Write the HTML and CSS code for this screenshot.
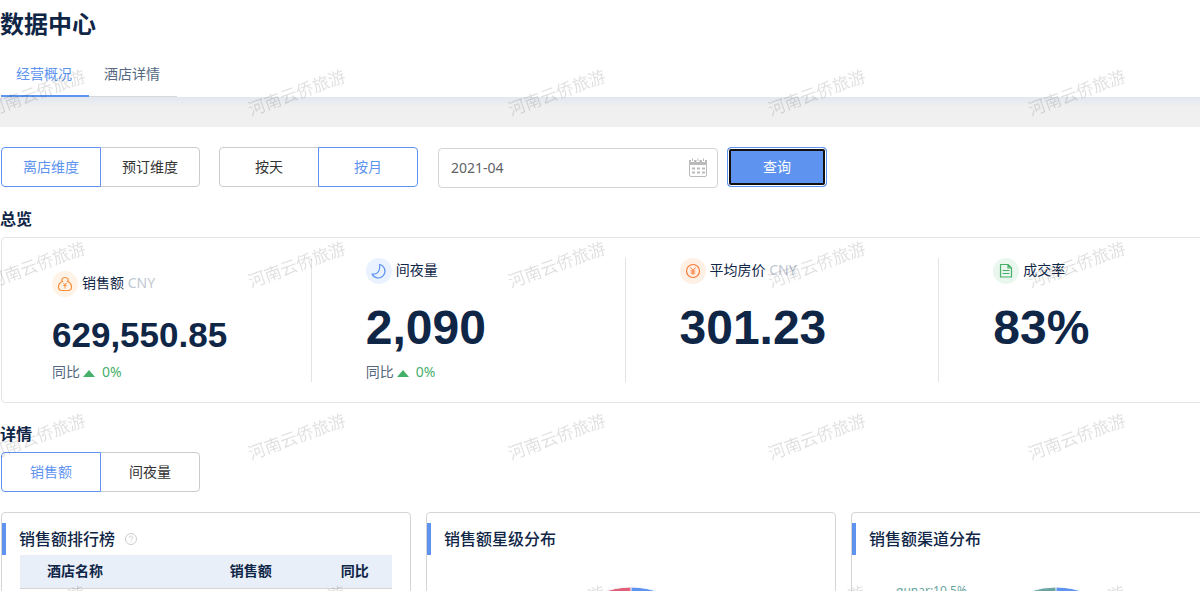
FILE: index.html
```html
<!DOCTYPE html>
<html lang="zh-CN">

<head>
    <meta charset="UTF-8">
    <meta name="viewport" content="width=device-width, initial-scale=1.0">
    <title>数据中心</title>
    <link rel="stylesheet" href="styles.css">
</head>

<body>
    <div class="page">
        <header class="page-header">
            <h1>数据中心</h1>
            <nav class="tabs">
                <a class="tab active" href="#overview">经营概况</a>
                <a class="tab" href="#hotel">酒店详情</a>
            </nav>
        </header>
        <div class="band"></div>

        <main class="content">
            <div class="filters">
                <div class="btn-group">
                    <button type="button" class="active">离店维度</button>
                    <button type="button">预订维度</button>
                </div>
                <div class="btn-group">
                    <button type="button">按天</button>
                    <button type="button" class="active">按月</button>
                </div>
                <div class="date-search">
                    <label class="date-box">
                        <input type="text" value="2021-04" aria-label="月份">
                        <svg width="20" height="20" viewBox="0 0 20 20" fill="none" stroke="#bbb">
                            <path d="M1.5 5v12a1.5 1.5 0 0 0 1.5 1.5h14a1.5 1.5 0 0 0 1.5-1.5V5" />
                            <path d="M1 2h2v2h3V2h2.500v2h3V2H14v2h3V2h2v5H1z" fill="#bbb" stroke="none" />
                            <path d="M4.500 .5v2.500M10 .5v2.500M15.500 .5v2.500" />
                            <path d="M4 10.500h3m2 0h3m2 0h3M4 14.500h3m2 0h3m2 0h3" stroke-width="2" />
                        </svg>
                    </label>
                    <button type="button" class="search-btn">查询</button>
                </div>
            </div>

            <h2>总览</h2>
            <section class="overview" id="overview">
                <div class="stat stat-small">
                    <div class="stat-name">
                        <svg class="stat-icon" viewBox="0 0 26 26" fill="none" stroke="#fa8c35">
                            <circle cx="13" cy="13" r="13" fill="#fff2e6" stroke="none" />
                            <path d="M10.500 10.500C9 9 10 6.500 13 6.500s4 2.500 2.500 4c2.500 1 4 3.200 4 5.200 0 2.600-1.700 3.800-3.500 3.800h-6c-1.800 0-3.500-1.200-3.500-3.800 0-2 1.500-4.200 4-5.200z" stroke-width="1.200" />
                            <path d="M11.500 12l1.500 2 1.500-2M11.300 14.500h3.400M13 14v3.500" stroke-width=".9" />
                        </svg>
                        <span>销售额 <em>CNY</em></span>
                    </div>
                    <div class="stat-value">629,550.85</div>
                    <div class="compare">同比<i class="up"></i><b>0%</b></div>
                </div>
                <div class="stat">
                    <div class="stat-name">
                        <svg class="stat-icon" viewBox="0 0 26 26" fill="none" stroke="#6094f0">
                            <circle cx="13" cy="13" r="13" fill="#ebf2ff" stroke="none" />
                            <path d="M13.500 6.500a6.800 6.800 0 1 1-7.500 9.500c4.500 1 8.500-2 7.500-9.500z" stroke-width="1.200" stroke-linejoin="round" />
                        </svg>
                        <span>间夜量</span>
                    </div>
                    <div class="stat-value">2,090</div>
                    <div class="compare">同比<i class="up"></i><b>0%</b></div>
                </div>
                <div class="stat">
                    <div class="stat-name">
                        <svg class="stat-icon" viewBox="0 0 26 26" fill="none" stroke="#fa7a35">
                            <circle cx="13" cy="13" r="13" fill="#fff0e6" stroke="none" />
                            <circle cx="13" cy="13" r="6.500" stroke-width="1.200" />
                            <path d="M10.500 9.500l2.500 3 2.500-3M10.700 13h4.600M10.700 15h4.600M13 12.500v4.500" />
                        </svg>
                        <span>平均房价 <em>CNY</em></span>
                    </div>
                    <div class="stat-value">301.23</div>
                </div>
                <div class="stat">
                    <div class="stat-name">
                        <svg class="stat-icon" viewBox="0 0 26 26" fill="none" stroke="#46b06a">
                            <circle cx="13" cy="13" r="13" fill="#eaf7ee" stroke="none" />
                            <path d="M7.500 6.500H15l3.500 3.500v9h-11zM15 6.500V10h3.500" stroke-width="1.200" stroke-linejoin="round" />
                            <path d="M9.500 12.500h7M9.500 15.500h7" />
                        </svg>
                        <span>成交率</span>
                    </div>
                    <div class="stat-value">83%</div>
                </div>
            </section>

            <h2>详情</h2>
            <div class="btn-group">
                <button type="button" class="active">销售额</button>
                <button type="button">间夜量</button>
            </div>

            <section class="cards">
                <div class="card">
                    <h3>销售额排行榜
                        <svg class="help" width="12" height="12" viewBox="0 0 12 12" fill="none" stroke="#ccc">
                            <circle cx="6" cy="6" r="5.500" />
                            <path d="M4.300 4.800c0-2.300 3.400-2.300 3.400-.2C7.700 5.800 6 5.800 6 7.200M6 8.300v1" />
                        </svg>
                    </h3>
                    <table class="rank">
                        <thead>
                            <tr>
                                <th>酒店名称</th>
                                <th>销售额</th>
                                <th>同比</th>
                            </tr>
                        </thead>
                    </table>
                </div>
                <div class="card">
                    <h3>销售额星级分布</h3>
                    <svg class="pie" viewBox="0 0 408 200" stroke="#fff">
                        <circle cx="204" cy="112" r="80" fill="#5e94f0" />
                        <path d="M204 112V32a80 80 0 0 0-80 80z" fill="#e0607a" />
                    </svg>
                </div>
                <div class="card">
                    <h3>销售额渠道分布</h3>
                    <svg class="pie" viewBox="0 0 408 200" stroke="#fff">
                        <circle cx="204" cy="112" r="80" fill="#5e94f0" />
                        <path d="M204 112V32a80 80 0 0 0-49 17z" fill="#6aa5a0" />
                        <text class="pie-label" x="44" y="40" fill="#6aa5a0" stroke="none">qunar:10.5%</text>
                    </svg>
                </div>
            </section>
        </main>

        <svg class="watermark" aria-hidden="true">
            <defs>
                <pattern id="mark" x="-27" y="6" width="260" height="172" patternUnits="userSpaceOnUse">
                    <text x="18" y="110" transform="rotate(-20 18 110)">河南云侨旅游</text>
                </pattern>
            </defs>
            <rect width="100%" height="100%" fill="url(#mark)" />
        </svg>
    </div>
</body>

</html>
```

FILE: styles.css
```css
* {
    box-sizing: border-box;
}

body {
    margin: 0;
    font-family: 'Noto Sans', 'Noto Sans CJK SC', sans-serif;
    font-size: 14px;
    line-height: 20px;
    color: #333;
    background-color: #fff;
}

.page {
    position: relative;
    height: 100vh;
    overflow: hidden;
}

h1,
h2,
h3 {
    margin: 0;
    color: #0f2647;
}

h1 {
    font-size: 24px;
    line-height: 48px;
    font-weight: 700;
}

.tabs {
    display: flex;
    padding: 4px 0 0 1px;
}

.tab {
    width: 88px;
    height: 45px;
    padding-left: 15px;
    line-height: 44px;
    color: #556880;
    text-decoration: none;
    border-bottom: 1px solid #d8d8d8;
}

.tab.active {
    color: #5e94f0;
    border-bottom: 2px solid #5e94f0;
}

.band {
    height: 30px;
    background: linear-gradient(#e2e7f0, #f0f0f0 10px);
}

.content {
    min-width: 1261px;
    padding: 20px 0 20px 1px;
}

.filters {
    display: flex;
    gap: 19px;
}

.btn-group {
    display: flex;
}

.btn-group button {
    width: 100px;
    height: 40px;
    font: inherit;
    color: #333;
    background-color: #fff;
    border: 1px solid #ccc;
    border-radius: 4px 0 0 4px;
}

.btn-group button + button {
    margin-left: -1px;
    border-radius: 0 4px 4px 0;
}

.btn-group .active {
    position: relative;
    color: #5e94f0;
    border-color: #5e94f0;
}

.date-search {
    display: flex;
    gap: 9px;
    padding-left: 1px;
}

.date-box {
    display: flex;
    align-items: center;
    width: 280px;
    height: 40px;
    margin-top: 1px;
    padding: 0 9px 0 12px;
    border: 1px solid #d4d4d4;
    border-radius: 4px;
}

.date-box input {
    flex: 1;
    min-width: 0;
    padding: 0;
    font: inherit;
    color: #606266;
    border: none;
    outline: none;
}

.search-btn {
    width: 100px;
    height: 40px;
    font: inherit;
    color: #fff;
    background-color: #5e94f0;
    border: 1px solid #5e94f0;
    border-radius: 4px;
    box-shadow: inset 0 0 0 1px #fff, inset 0 0 0 3px #101010;
}

h2 {
    margin: 20px 0 6px -1px;
    font-size: 16px;
    line-height: 23px;
}

.overview {
    display: grid;
    grid-template-columns: repeat(4, 1fr);
    gap: 54px;
    height: 166px;
    padding: 20px 7px 20px 50px;
    border: 1px solid #e4e4e4;
    border-radius: 4px;
}

.stat {
    border-right: 1px solid #e4e4e4;
}

.stat:last-child {
    border-right: none;
}

.stat-name {
    display: flex;
    align-items: center;
    gap: 4px;
    height: 26px;
    line-height: 24px;
    color: #0f2647;
    white-space: nowrap;
}

.stat-name span {
    padding-bottom: 2px;
}

.stat-name em {
    font-style: normal;
    color: #c0c8d2;
}

.stat-icon {
    width: 26px;
    height: 26px;
}

.stat-value {
    height: 78px;
    font: bold 48px/88px 'Liberation Sans', sans-serif;
    color: #0f2647;
}

.stat-small .stat-name {
    margin-top: 13px;
}

.stat-small .stat-value {
    height: 65px;
    font-size: 35px;
    line-height: 76px;
}

.compare {
    display: flex;
    align-items: center;
    color: #556880;
}

.compare b {
    font-weight: 400;
    color: #46b06a;
}

.up {
    margin: 3px 7px 0 3px;
    border: 6px solid transparent;
    border-top: none;
    border-bottom: 7px solid #46b06a;
}

.cards {
    display: grid;
    grid-template-columns: repeat(3, 1fr);
    gap: 15px;
    margin-top: 20px;
}

.card {
    min-height: 380px;
    padding-top: 10px;
    border: 1px solid #d4d4d4;
    border-radius: 4px;
}

.card h3 {
    display: flex;
    align-items: center;
    gap: 10px;
    height: 32px;
    padding-left: 13px;
    font-size: 16px;
    font-weight: 500;
    border-left: 4px solid #5e94f0;
}

.rank {
    width: calc(100% - 36px);
    margin: 0 18px;
    border-collapse: collapse;
    table-layout: fixed;
}

.rank th {
    height: 33px;
    padding: 0;
    color: #0f2647;
    background-color: #e8eff8;
    border-bottom: 1px solid #d4d4d4;
}

.rank th:first-child {
    width: 44%;
    padding-left: 27px;
    text-align: left;
}

.rank th:last-child {
    width: 20%;
}

.pie {
    display: block;
    width: 100%;
}

.pie-label {
    font-size: 12px;
}

/* company name repeated over the whole page */
.watermark {
    position: absolute;
    top: 0;
    left: 0;
    width: 100%;
    height: 100%;
    pointer-events: none;
}

.watermark text {
    font-size: 17px;
    font-weight: 400;
    fill: rgba(0, 0, 0, 0.12);
}
```
